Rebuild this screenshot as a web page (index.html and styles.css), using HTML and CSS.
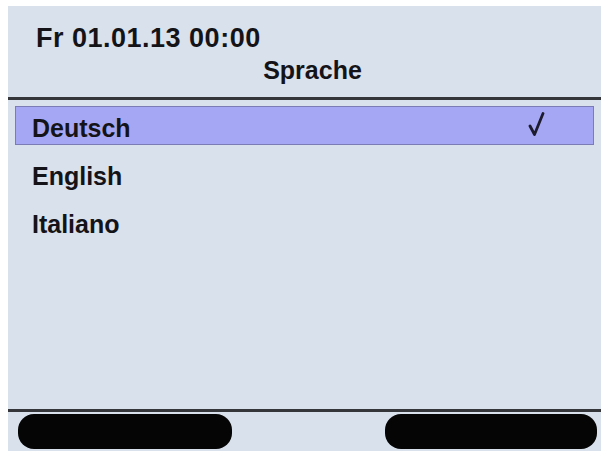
FILE: index.html
```html
<!DOCTYPE html>
<html lang="de">
<head>
<meta charset="utf-8">
<title>Sprache</title>
<link rel="stylesheet" href="styles.css">
</head>
<body>
<div class="panel">
  <header class="header">
    <div class="datetime">Fr 01.01.13 00:00</div>
    <div class="title">Sprache</div>
  </header>
  <ul class="list">
    <li class="row selected">
      <span>Deutsch</span>
      <svg class="check" width="17" height="25" viewBox="0 0 17 25" aria-hidden="true">
        <path d="M2 14 L6.5 22.5 L15 1.5" fill="none" stroke="#1c1c2e" stroke-width="2.8" stroke-linecap="round" stroke-linejoin="round"/>
      </svg>
    </li>
    <li class="row">English</li>
    <li class="row">Italiano</li>
  </ul>
  <footer class="footer">
    <div class="softkey left"></div>
    <div class="softkey right"></div>
  </footer>
</div>
</body>
</html>
```
FILE: styles.css
```css
html, body {
  margin: 0;
  padding: 0;
  background: #ffffff;
}

body {
  font-family: "Liberation Sans", Arial, sans-serif;
  font-weight: bold;
  color: #141418;
}

.panel {
  margin: 6px 0 0 8px;
  width: 593px;
  height: 445px;
  background: #d9e1ec;
  display: flex;
  flex-direction: column;
  box-sizing: border-box;
}

.header {
  padding: 17px 0 12px 28px;
  border-bottom: 3px solid #34363a;
}

.datetime {
  font-size: 27px;
  line-height: 30px;
  letter-spacing: 0.5px;
}

.title {
  margin-top: 2px;
  font-size: 25px;
  line-height: 30px;
  text-align: center;
  transform: translateX(-6px);
}

.list {
  list-style: none;
  margin: 0;
  padding: 6px 7px 0 7px;
  flex: 1;
  display: flex;
  flex-direction: column;
  gap: 9px;
}

.row {
  height: 39px;
  box-sizing: border-box;
  padding: 4px 0 0 16px;
  font-size: 25px;
  line-height: 34px;
  border: 1px solid transparent;
  display: flex;
  justify-content: space-between;
  align-items: flex-start;
}

.row.selected {
  background: #a6a7f4;
  border-color: #7b7cb6;
}

.check {
  margin: 1px 48px 0 0;
}

.footer {
  border-top: 3px solid #34363a;
  padding: 2px 4px 2px 10px;
  display: flex;
  justify-content: space-between;
}

.softkey {
  height: 35px;
  background: #050505;
  border-radius: 16px;
}

.softkey.left {
  width: 214px;
}

.softkey.right {
  width: 212px;
}
```
